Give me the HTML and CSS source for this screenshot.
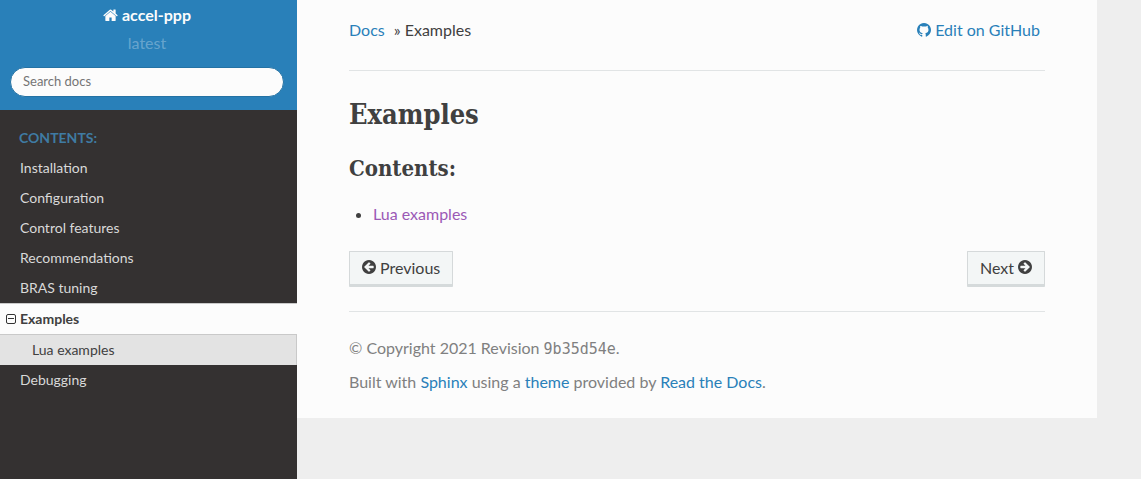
FILE: index.html
```html
<!DOCTYPE html>
<html lang="en">
<head>
    <meta charset="UTF-8">
    <meta name="viewport" content="width=device-width, initial-scale=1.0">
    <title>Examples - accel-ppp</title>
    <link rel="stylesheet" href="styles.css">
</head>
<body>
    <nav class="sidebar">
        <div class="side-search">
            <a class="project" href="#">
                <svg class="icon icon-home" viewBox="64 192 1664 1344" aria-hidden="true"><path d="M1472 992v480q0 26-19 45t-45 19h-384v-384h-256v384h-384q-26 0-45-19t-19-45v-480q0-1 .5-3t.5-3l575-474 575 474q1 2 1 6zm223-69l-62 74q-8 9-21 11h-3q-13 0-21-7l-692-577-692 577q-12 8-24 7-13-2-21-11l-62-74q-8-10-7-23.5t11-21.5l719-599q32-26 76-26t76 26l244 204v-195q0-14 9-23t23-9h192q14 0 23 9t9 23v408l219 182q10 8 11 21.5t-7 23.5z"/></svg>
                accel-ppp
            </a>
            <div class="version">latest</div>
            <form>
                <input type="text" name="q" placeholder="Search docs" aria-label="Search docs">
            </form>
        </div>
        <div class="menu">
            <p class="caption">Contents:</p>
            <ul>
                <li><a href="#">Installation</a></li>
                <li><a href="#">Configuration</a></li>
                <li><a href="#">Control features</a></li>
                <li><a href="#">Recommendations</a></li>
                <li><a href="#">BRAS tuning</a></li>
                <li class="current">
                    <a href="#">
                        <svg class="toggle" viewBox="0 0 10 10" aria-hidden="true"><rect x="0.5" y="0.5" width="9" height="9" rx="1.5"/><path d="M2 4.500h6"/></svg>
                        Examples
                    </a>
                    <ul>
                        <li><a href="#">Lua examples</a></li>
                    </ul>
                </li>
                <li><a href="#">Debugging</a></li>
            </ul>
        </div>
    </nav>

    <section class="content-wrap">
        <div class="content">
            <div class="breadcrumbs">
                <ul>
                    <li><a href="#">Docs</a></li>
                    <li>» Examples</li>
                </ul>
                <a class="github" href="#">
                    <svg class="icon" viewBox="128 128 1536 1536" aria-hidden="true"><path d="M896 128q209 0 385.500 103t279.500 279.500 103 385.500q0 251-146.500 451.500t-378.500 277.500q-27 5-40-7t-13-30q0-3 .5-76.500t.5-134.500q0-97-52-142 57-6 102.500-18t94-39 81-66.500 53-105 20.500-150.500q0-119-79-206 37-91-8-204-28-9-81 11t-92 44l-38 24q-93-26-192-26t-192 26q-16-11-42.500-27t-83.500-38.500-85-13.500q-45 113-8 204-79 87-79 206 0 85 20.500 150t52.500 105 80.500 67 94 39 102.500 18q-39 36-49 103-21 10-45 15t-57 5-65.500-21.500-55.500-62.500q-19-32-48.500-52t-49.500-24l-20-3q-21 0-29 4.500t-5 11.500 9 14 13 12l7 5q22 10 43.500 38t31.500 51l10 23q13 38 44 61.500t67 30 69.500 7 55.500-3.500l23-4q0 38 .5 88.500t.5 54.500q0 18-13 30t-40 7q-232-77-378.500-277.500t-146.500-451.500q0-209 103-385.500t279.500-279.500 385.500-103z"/></svg>
                    Edit on GitHub
                </a>
            </div>
            <hr>
            <main>
                <h1>Examples</h1>
                <h2>Contents:</h2>
                <ul class="toc">
                    <li><a href="#">Lua examples</a></li>
                </ul>
            </main>
            <footer>
                <div class="pager">
                    <button type="button">
                        <svg class="icon" viewBox="128 128 1536 1536" aria-hidden="true"><path d="M1408 960v-128q0-26-19-45t-45-19h-502l189-189q19-19 19-45t-19-45l-91-91q-18-18-45-18t-45 18l-362 362-91 91q-18 18-18 45t18 45l91 91 362 362q18 18 45 18t45-18l91-91q18-18 18-45t-18-45l-189-189h502q26 0 45-19t19-45zm256-64q0 209-103 385.500t-279.500 279.500-385.500 103-385.500-103-279.500-279.500-103-385.500 103-385.500 279.500-279.500 385.500-103 385.500 103 279.500 279.500 103 385.500z"/></svg>
                        Previous
                    </button>
                    <button type="button">
                        Next
                        <svg class="icon" viewBox="128 128 1536 1536" aria-hidden="true"><path transform="translate(1792 0) scale(-1 1)" d="M1408 960v-128q0-26-19-45t-45-19h-502l189-189q19-19 19-45t-19-45l-91-91q-18-18-45-18t-45 18l-362 362-91 91q-18 18-18 45t18 45l91 91 362 362q18 18 45 18t45-18l91-91q18-18 18-45t-18-45l-189-189h502q26 0 45-19t19-45zm256-64q0 209-103 385.500t-279.500 279.500-385.500 103-385.500-103-279.500-279.500-103-385.500 103-385.500 279.500-279.500 385.500-103 385.500 103 279.500 279.500 103 385.500z"/></svg>
                    </button>
                </div>
                <hr>
                <p>© Copyright 2021 Revision <code>9b35d54e</code>.</p>
                <p>Built with <a href="#">Sphinx</a> using a <a href="#">theme</a> provided by <a href="#">Read the Docs</a>.</p>
            </footer>
        </div>
    </section>
</body>
</html>
```
FILE: styles.css
```css
* {
    box-sizing: border-box;
}

body {
    margin: 0;
    display: flex;
    min-height: 100vh;
    background: #eeeeee;
    color: #404040;
    font-family: Lato, "Liberation Sans", sans-serif;
    font-size: 16px;
    line-height: 24px;
}

a {
    color: #2980b9;
    text-decoration: none;
}

ul {
    list-style: none;
    margin: 0;
    padding: 0;
}

hr {
    border: 0;
    border-top: 1px solid #e1e4e5;
    margin: 0;
}

.icon {
    width: 14px;
    height: 14px;
    fill: currentColor;
}

/* Sidebar */
.sidebar {
    flex: 0 0 297px;
    background: #343131;
}

.side-search {
    background: #2980b9;
    padding: 3px 13px 13px 10px;
    text-align: center;
}

.project {
    display: flex;
    justify-content: center;
    align-items: center;
    gap: 4px;
    color: #fcfcfc;
    font-weight: bold;
}

.icon-home {
    width: 15px;
    height: 12px;
}

.version {
    margin: 4px 0 12px;
    color: rgba(255, 255, 255, 0.3);
}

.side-search input {
    display: block;
    width: 100%;
    height: 30px;
    padding: 0 12px 2px;
    border: 1px solid #2472a4;
    border-radius: 15px;
    background: #fcfcfc;
    font-family: inherit;
    font-size: 13px;
}

.side-search input::placeholder {
    color: #757575;
}

.caption {
    margin: 0;
    padding: 13px 19px 0;
    line-height: 30px;
    font-size: 14px;
    font-weight: bold;
    text-transform: uppercase;
    color: #3f7ba3;
}

.menu li a {
    display: flex;
    align-items: center;
    height: 30px;
    padding-left: 20px;
    font-size: 14px;
    color: #d9d9d9;
}

.menu .current {
    background: #fcfcfc;
}

.menu .current a {
    height: 31px;
    gap: 4px;
    padding-left: 6px;
    border-top: 1px solid #c9c9c9;
    color: #404040;
    font-weight: bold;
}

.menu .current li a {
    padding-left: 32px;
    border-right: 1px solid #c9c9c9;
    background: #e3e3e3;
    font-weight: normal;
}

.toggle {
    width: 10px;
    height: 10px;
    fill: none;
    stroke: #333333;
}

/* Content */
.content-wrap {
    flex: 1;
}

.content {
    max-width: 800px;
    padding: 18px 52px 24px;
    background: #fcfcfc;
}

.breadcrumbs {
    display: flex;
    justify-content: space-between;
    margin-bottom: 28px;
    padding-right: 5px;
}

.breadcrumbs ul {
    display: flex;
    gap: 9px;
}

.github {
    display: flex;
    align-items: center;
    gap: 4px;
}

h1,
h2 {
    margin: 0;
    font-family: "Roboto Slab", "DejaVu Serif Condensed", "DejaVu Serif", serif;
    font-weight: bold;
}

h1 {
    margin-top: 26px;
    font-size: 27px;
    line-height: 36px;
}

h2 {
    margin-top: 19px;
    font-size: 22px;
    line-height: 32px;
}

.toc {
    list-style: disc;
    margin: 18px 0 25px;
    padding-left: 24px;
}

.toc a {
    color: #9b59b6;
}

.pager {
    display: flex;
    justify-content: space-between;
    margin-bottom: 24px;
}

.pager button {
    display: flex;
    align-items: center;
    gap: 4px;
    height: 36px;
    padding: 0 12px 2px;
    border: 1px solid #d5d9da;
    border-bottom: 3px solid #d5dadb;
    border-radius: 1px;
    background: #f3f6f6;
    color: #404040;
    font-family: inherit;
    font-size: 16px;
}

footer {
    color: #808080;
}

footer p {
    margin: 10px 0 0;
}

footer hr + p {
    margin-top: 24px;
}

code {
    font-family: "DejaVu Sans Mono", "Liberation Mono", monospace;
    font-size: 15px;
    line-height: 16px;
}
```
